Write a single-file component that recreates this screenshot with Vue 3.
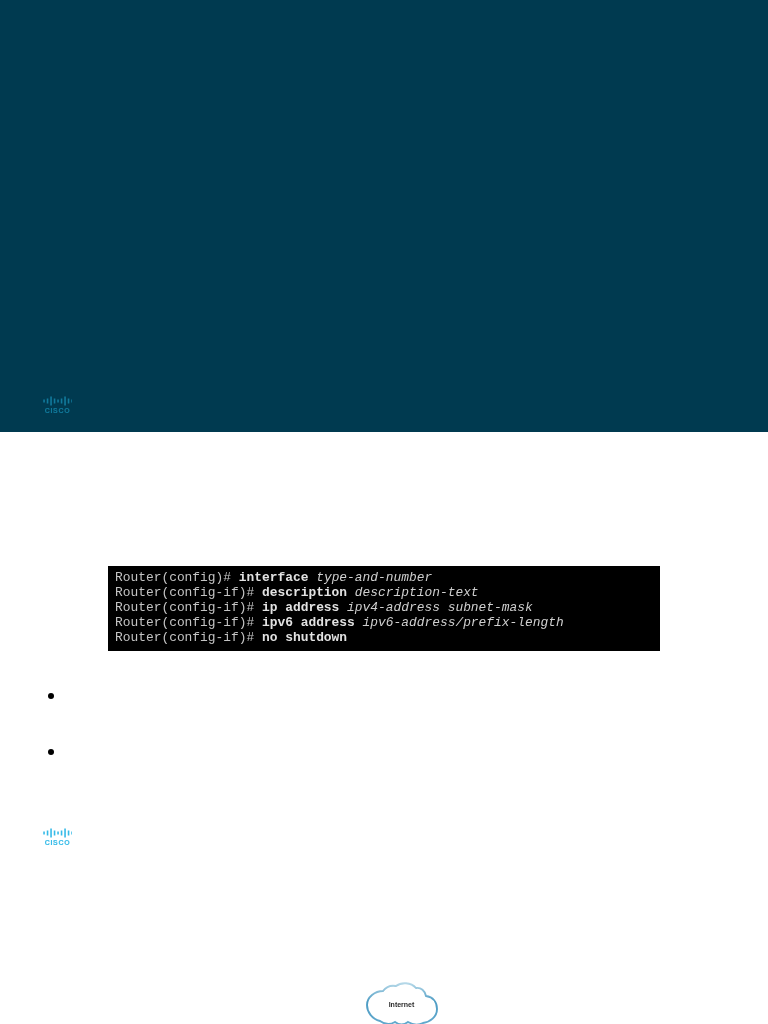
<script setup>
const bars = [3, 5, 9, 5, 3, 5, 9, 5, 3]
const barRects = bars.map((h, n) => ({ x: 0.25 + n * 3.5, y: 5 - h / 2, h }))
const lines = [
  { p: 'Router(config)# ', c: 'interface', a: 'type-and-number' },
  { p: 'Router(config-if)# ', c: 'description', a: 'description-text' },
  { p: 'Router(config-if)# ', c: 'ip address', a: 'ipv4-address subnet-mask' },
  { p: 'Router(config-if)# ', c: 'ipv6 address', a: 'ipv6-address/prefix-length' },
  { p: 'Router(config-if)# ', c: 'no shutdown', a: '' },
]
</script>

<template>
  <main class="deck">
    <section class="slide dark">
      <div class="logo logo-dim">
        <svg class="bars" width="29" height="10" viewBox="0 0 29 10">
          <rect v-for="b in barRects" :key="b.x" :x="b.x" :y="b.y" width="1.6" :height="b.h" fill="currentColor" />
        </svg>
        <span class="word">CISCO</span>
      </div>
    </section>

    <section class="slide light">
      <pre class="terminal"><code v-for="l in lines" :key="l.c" class="line">{{ l.p }}<b>{{ l.c }}</b> <em>{{ l.a }}</em></code></pre>
      <div class="bullets">
        <span class="dot"></span>
        <span class="dot"></span>
      </div>
      <div class="logo logo-bright">
        <svg class="bars" width="29" height="10" viewBox="0 0 29 10">
          <rect v-for="b in barRects" :key="b.x" :x="b.x" :y="b.y" width="1.6" :height="b.h" fill="currentColor" />
        </svg>
        <span class="word">CISCO</span>
      </div>
    </section>

    <section class="slide cloud-slide">
      <div class="cloud">
        <svg class="cloud-shape" width="72" height="44" viewBox="0 0 72 44" fill="none">
          <defs>
            <linearGradient id="cloudStroke" x1="0" y1="0" x2="0" y2="1">
              <stop offset="0" stop-color="#b5d8e8" />
              <stop offset="0.45" stop-color="#4d9cc4" />
              <stop offset="1" stop-color="#62a9cd" />
            </linearGradient>
          </defs>
          <path
            d="M14 39 C6 37 1 30 1 23 C1 15 9 9 17 9 C20 5 25 3 30 4 C35 0 45 0 50 6 C55 5 59 9 60 14 C67 15 71 20 71 27 C71 35 64 40 57 41 C53 43 47 43 42 40 C38 43 33 43 29 40 C24 43 18 42 14 39 Z"
            stroke="url(#cloudStroke)"
            stroke-width="1.9"
          />
        </svg>
        <span class="cloud-label">Internet</span>
      </div>
    </section>
  </main>
</template>

<style>
html, body { margin: 0; background: #fff; }
</style>

<style scoped>
.deck {
  height: 1024px;
  overflow: hidden;
  font-family: "Liberation Sans", Arial, sans-serif;
}
.slide { box-sizing: border-box; }
.dark {
  height: 432px;
  background: #003a50;
  padding: 396px 0 0 43px;
}
.light {
  height: 433px;
  padding-top: 134px;
  background: #fff;
}
.terminal {
  box-sizing: border-box;
  width: 552px;
  height: 85px;
  margin: 0 0 0 108px;
  padding: 4px 0 0 7px;
  background: #000;
  color: #c4c4c4;
  font-family: "Liberation Mono", "Courier New", monospace;
  font-size: 12.9px;
  line-height: 15px;
  filter: blur(0.4px);
}
.line { display: block; font-family: inherit; white-space: pre; }
.line b { color: #e2e2e2; }
.line em { color: #cfcfcf; }
.bullets {
  display: flex;
  flex-direction: column;
  gap: 50px;
  padding: 42px 0 0 48px;
}
.dot {
  width: 6px;
  height: 6px;
  border-radius: 50%;
  background: #000;
  filter: blur(0.3px);
}
.logo {
  display: flex;
  flex-direction: column;
  align-items: center;
  width: 29px;
  margin-left: 43px;
  filter: blur(0.35px);
}
.dark .logo { margin-left: 0; }
.light .logo { margin-top: 73px; }
.bars { display: block; }
.word {
  margin-top: 1px;
  font-size: 7px;
  line-height: 7px;
  font-weight: 700;
  letter-spacing: 0.7px;
  -webkit-text-stroke: 0.1px currentColor;
}
.logo-dim { color: #117a9c; }
.logo-bright { color: #36bbe8; }
.cloud-slide {
  display: flex;
  justify-content: center;
  padding: 117px 0 0 35px;
}
.cloud {
  position: relative;
  width: 72px;
  height: 44px;
  flex: none;
}
.cloud-shape { display: block; filter: blur(0.4px); }
.cloud-label {
  position: absolute;
  left: 0;
  right: 0;
  top: 18px;
  text-align: center;
  font-size: 7px;
  line-height: 10px;
  font-weight: 700;
  color: #2b2b2b;
  filter: blur(0.25px);
}
</style>
